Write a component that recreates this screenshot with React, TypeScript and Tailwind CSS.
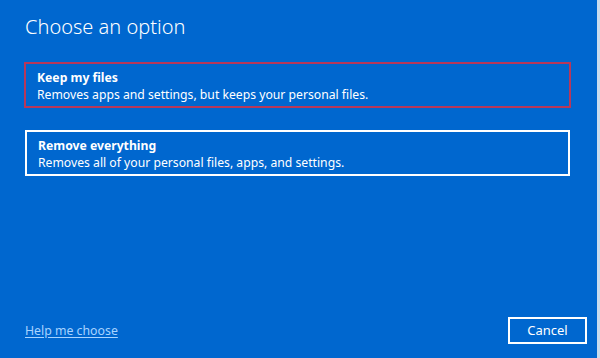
import React from 'react';

const options = [
    { title: 'Keep my files', desc: 'Removes apps and settings, but keeps your personal files.', selected: true },
    { title: 'Remove everything', desc: 'Removes all of your personal files, apps, and settings.', selected: false },
];

const App: React.FC = () => {
    return (
        <div className="flex w-[600px] h-[358px] overflow-hidden" style={{ fontFamily: '"Noto Sans", "Open Sans", sans-serif' }}>
            <div className="flex-1 bg-[#0067cf] text-white flex flex-col pl-[24px] pr-[10px]">
                <h1 className="mt-[12px] text-[20px] font-light leading-[30px] pl-px">Choose an option</h1>

                <div className="mt-[20px] flex flex-col gap-[22px] w-[547px]">
                    {options.map(opt => (
                        <div
                            key={opt.title}
                            className={`flex flex-col px-[11px] py-[6px] h-[46px] border-2 ${opt.selected ? 'border-[#b8385a]' : 'border-white w-[545px] ml-px h-[44px] py-[5px]'}`}
                        >
                            <span className="text-[12.2px] font-bold leading-[16px]">{opt.title}</span>
                            <span className="text-[12.2px] leading-[17px]">{opt.desc}</span>
                        </div>
                    ))}
                </div>

                <div className="mt-auto mb-[14px] flex items-end justify-between">
                    <a className="text-[12.3px] text-[#a8d4ff] underline underline-offset-2 pl-px mb-[4px]" href="#">Help me choose</a>
                    <button className="w-[79px] h-[27px] border-2 border-white text-[13px] leading-none">Cancel</button>
                </div>
            </div>
            <div className="w-[3px] bg-[#c9dcee]" />
        </div>
    );
};

export default App;
